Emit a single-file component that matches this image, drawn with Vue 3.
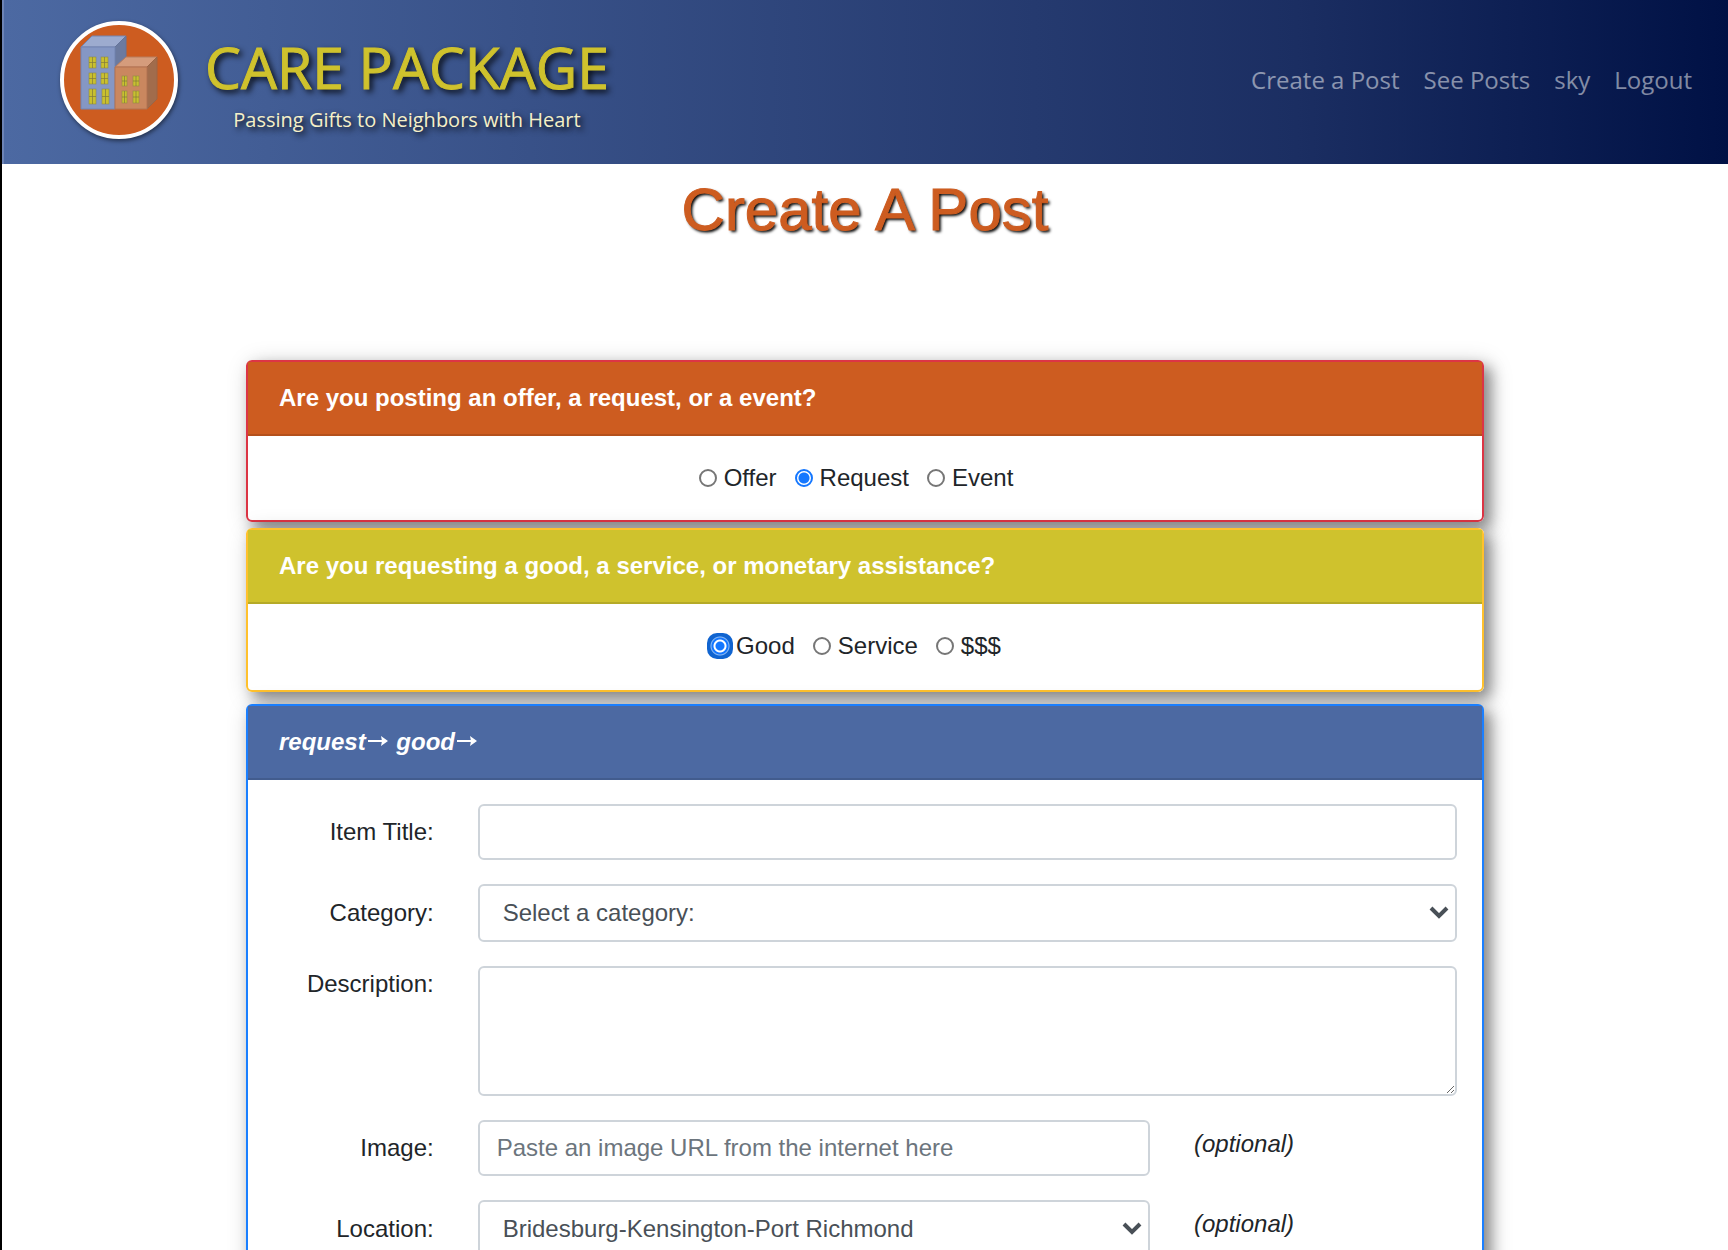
<script setup>
import { ref, onMounted } from 'vue'

const links = ['Create a Post', 'See Posts', 'sky', 'Logout']
const kinds = ['Offer', 'Request', 'Event']
const types = ['Good', 'Service', '$$$']
const kind = ref('Request')
const type = ref('Good')
const typeInputs = ref([])

const title = ref('')
const category = ref('')
const description = ref('')
const image = ref('')
const location = ref('Bridesburg-Kensington-Port Richmond')

const towerWindows = [
  [30, 37, 7, 11], [42, 37, 7, 11],
  [30, 53, 7, 11], [42, 53, 7, 11],
  [30, 69, 7, 15], [43, 69, 7, 15],
]
const shopWindows = [
  [63, 56, 5, 10], [74, 56, 6, 10],
  [63, 71, 5, 12], [74, 71, 6, 12],
]

onMounted(() => typeInputs.value[0]?.focus())
</script>

<template>
  <div class="page">
    <header class="navbar">
      <a class="brand" href="#">
        <svg class="logo" viewBox="0 0 120 120" aria-hidden="true">
          <circle cx="60" cy="60" r="57" fill="#cd5c20" stroke="#fff" stroke-width="4" />
          <g stroke-width="1" stroke-linejoin="round">
            <path d="M22 27 33 16H67L56 27Z" fill="#9dabcf" stroke="#7585b0" />
            <path d="M56 27 67 16V37L56 48Z" fill="#6b7a9f" stroke="#65749a" />
            <path d="M22 27H56V89H22Z" fill="#8597c4" stroke="#7384b1" />
            <path d="M56 47 67 37H98L88 47Z" fill="#d59c7c" stroke="#b87c5c" />
            <path d="M88 47 98 37V79L88 89Z" fill="#a16c4c" stroke="#9b6445" />
            <path d="M56 47H88V89H56Z" fill="#ca875f" stroke="#b27352" />
          </g>
          <g v-for="w in [...towerWindows, ...shopWindows]" :key="w.join()">
            <rect :x="w[0]" :y="w[1]" :width="w[2]" :height="w[3]" fill="#c9c02e" stroke="#8f8a45" stroke-width=".6" />
            <path
              :d="`M${w[0] + w[2] / 2} ${w[1]}v${w[3]}M${w[0]} ${w[1] + w[3] / 2}h${w[2]}`"
              stroke="#7f7a3c"
              stroke-width=".7"
            />
          </g>
        </svg>
        <span class="brand-text">
          <span class="brand-name">CARE PACKAGE</span>
          <span class="tagline">Passing Gifts to Neighbors with Heart</span>
        </span>
      </a>
      <nav class="links">
        <a v-for="link in links" :key="link" href="#">{{ link }}</a>
      </nav>
    </header>

    <main>
      <h1>Create A Post</h1>

      <form class="cards" @submit.prevent>
        <fieldset class="card red">
          <legend class="card-header">Are you posting an offer, a request, or a event?</legend>
          <div class="choices">
            <label v-for="k in kinds" :key="k">
              <input v-model="kind" type="radio" name="kind" :value="k" />
              <span>{{ k }}</span>
            </label>
          </div>
        </fieldset>

        <fieldset class="card yellow">
          <legend class="card-header">Are you requesting a good, a service, or monetary assistance?</legend>
          <div class="choices">
            <label v-for="t in types" :key="t">
              <input ref="typeInputs" v-model="type" type="radio" name="type" :value="t" />
              <span>{{ t }}</span>
            </label>
          </div>
        </fieldset>

        <section class="card blue">
          <h2 class="card-header path">
            request<svg class="arrow" viewBox="0 0 20 12" aria-hidden="true"><path d="M0 6H15" /><path class="tip" d="M13 1 20 6 13 11 14 6Z" /></svg>
            good<svg class="arrow" viewBox="0 0 20 12" aria-hidden="true"><path d="M0 6H15" /><path class="tip" d="M13 1 20 6 13 11 14 6Z" /></svg>
          </h2>
          <div class="fields">
            <div class="row">
              <label for="title">Item Title:</label>
              <div class="control wide"><input id="title" v-model="title" type="text" /></div>
            </div>
            <div class="row">
              <label for="category">Category:</label>
              <div class="control wide">
                <div class="select">
                  <select id="category" v-model="category">
                    <option value="">Select a category:</option>
                  </select>
                  <svg viewBox="0 0 20 14" aria-hidden="true"><path d="M2 2 10 10 18 2" /></svg>
                </div>
              </div>
            </div>
            <div class="row top">
              <label for="description">Description:</label>
              <div class="control wide"><textarea id="description" v-model="description"></textarea></div>
            </div>
            <div class="row">
              <label for="image">Image:</label>
              <div class="control">
                <input id="image" v-model="image" type="text" placeholder="Paste an image URL from the internet here" />
              </div>
              <em>(optional)</em>
            </div>
            <div class="row">
              <label for="location">Location:</label>
              <div class="control">
                <div class="select">
                  <select id="location" v-model="location">
                    <option>Bridesburg-Kensington-Port Richmond</option>
                  </select>
                  <svg viewBox="0 0 20 14" aria-hidden="true"><path d="M2 2 10 10 18 2" /></svg>
                </div>
              </div>
              <em>(optional)</em>
            </div>
          </div>
        </section>
      </form>
    </main>
  </div>
</template>

<style>
html {
  height: 100%;
  overflow: hidden;
}
body {
  height: 100%;
  margin: 0;
  overflow: auto;
  scrollbar-width: none;
}
</style>

<style scoped>
* {
  box-sizing: border-box;
}
.page {
  border-left: 2px solid #000;
  background: #fff;
  color: #212529;
  font: 24px/36px "Liberation Sans", Arial, sans-serif;
}
.navbar {
  display: flex;
  align-items: center;
  justify-content: space-between;
  height: 164px;
  padding: 0 36px 4px 55px;
  border-left: 2px solid #6d84b5;
  background: linear-gradient(to right, #4c69a2, #1b2e62 75%, #001145);
  font-family: "Open Sans", sans-serif;
}
a {
  text-decoration: none;
}
.brand {
  display: flex;
  align-items: center;
  gap: 26px;
}
.logo {
  width: 120px;
  height: 120px;
  filter: drop-shadow(1px 2px 2px rgb(0 0 0 / 50%));
}
.brand-text {
  display: flex;
  flex-direction: column;
  align-items: center;
  padding-top: 10px;
}
.brand-name {
  color: #cfc22d;
  font-size: 57px;
  font-weight: 500;
  line-height: 70px;
  text-shadow: 3px 3px 6px #000;
  -webkit-text-stroke: 1px #cfc22d;
}
.tagline {
  color: #f5f0c8;
  font-size: 20px;
  line-height: 36px;
  text-shadow: 3px 3px 6px #000;
}
.links {
  display: flex;
  gap: 24px;
}
.links a {
  color: rgb(255 255 255 / 50%);
}
h1 {
  margin: 0;
  padding: 10px 0;
  color: #cd5c20;
  font-size: 60px;
  font-weight: 400;
  line-height: 72px;
  text-align: center;
  text-shadow: 2px 2px 3px #000;
  -webkit-text-stroke: 1px #cd5c20;
}
.cards {
  display: flex;
  flex-direction: column;
  gap: 6px;
  margin: 104px 244px 0;
}
.card {
  min-width: 0;
  margin: 0;
  padding: 0;
  border: 2px solid;
  border-radius: 6px;
  background: #fff;
  box-shadow:
    7px 7px 14px rgb(0 0 0 / 36%),
    5px 5px 24px rgb(0 0 0 / 22%);
}
.red {
  border-color: #dc3545;
}
.yellow {
  border-color: #ffc12d;
}
.blue {
  margin-top: 6px;
  border-color: #1a7fff;
}
.card-header {
  float: left;
  width: 100%;
  margin: 0;
  padding: 18px 31px;
  border-bottom: 2px solid rgb(0 0 0 / 12%);
  color: #fff;
  font-size: 24px;
  font-weight: 700;
  line-height: 36px;
}
.red .card-header {
  background: #cd5c20;
}
.yellow .card-header {
  background: #cfc22d;
}
.blue .card-header {
  float: none;
  background: #4c69a2;
}
.path {
  font-style: italic;
}
.arrow {
  width: 20px;
  height: 12px;
  margin: 0 2px 3px;
}
.arrow path {
  fill: none;
  stroke: #fff;
  stroke-width: 2;
}
.arrow .tip {
  fill: #fff;
  stroke: none;
}
.choices {
  display: flex;
  clear: both;
  justify-content: center;
  padding: 24px 0;
}
.yellow .choices {
  padding-bottom: 26px;
}
.choices label {
  display: flex;
  align-items: center;
  gap: 7px;
  margin-right: 18px;
}
.choices input {
  width: 18px;
  height: 18px;
  margin: 0;
  border: 2px solid #767676;
  border-radius: 50%;
  appearance: none;
  background: #fff;
}
.choices input:checked {
  border-color: #1477ff;
  background: radial-gradient(circle, #1477ff 5px, #fff 6px);
}
.choices input:checked:focus {
  width: 26px;
  height: 26px;
  margin: -4px;
  border: 0;
  border-radius: 10px;
  outline: none;
  background: radial-gradient(circle, #1477ff 4px, #fff 5px, #fff 6px, #1477ff 7px, #1477ff 8px, #8fbcf5 9px, #1064d0 10px);
}
.fields {
  display: flex;
  flex-direction: column;
  gap: 24px;
  padding: 24px 3px;
}
.row {
  display: grid;
  grid-template-columns: 2fr 7fr 3fr;
  align-items: center;
}
.row > * {
  padding: 0 22px;
}
.row label {
  text-align: right;
}
.top {
  align-items: start;
}
.wide {
  grid-column: span 2;
}
.row em {
  align-self: start;
  padding-top: 6px;
}
.control input,
.control select,
.control textarea {
  display: block;
  width: 100%;
  height: 56px;
  padding: 8px 17px;
  border: 2px solid #ced4da;
  border-radius: 6px;
  background: #fff;
  color: #495057;
  font: inherit;
}
.control input::placeholder {
  color: #6c757d;
  opacity: 1;
}
.control textarea {
  height: 130px;
}
.control select {
  height: 58px;
  padding: 8px 48px 8px 23px;
  appearance: none;
}
.select {
  position: relative;
}
.select svg {
  position: absolute;
  top: 22px;
  right: 8px;
  width: 20px;
  height: 14px;
  fill: none;
  stroke: #495057;
  stroke-width: 4;
  pointer-events: none;
}
</style>
